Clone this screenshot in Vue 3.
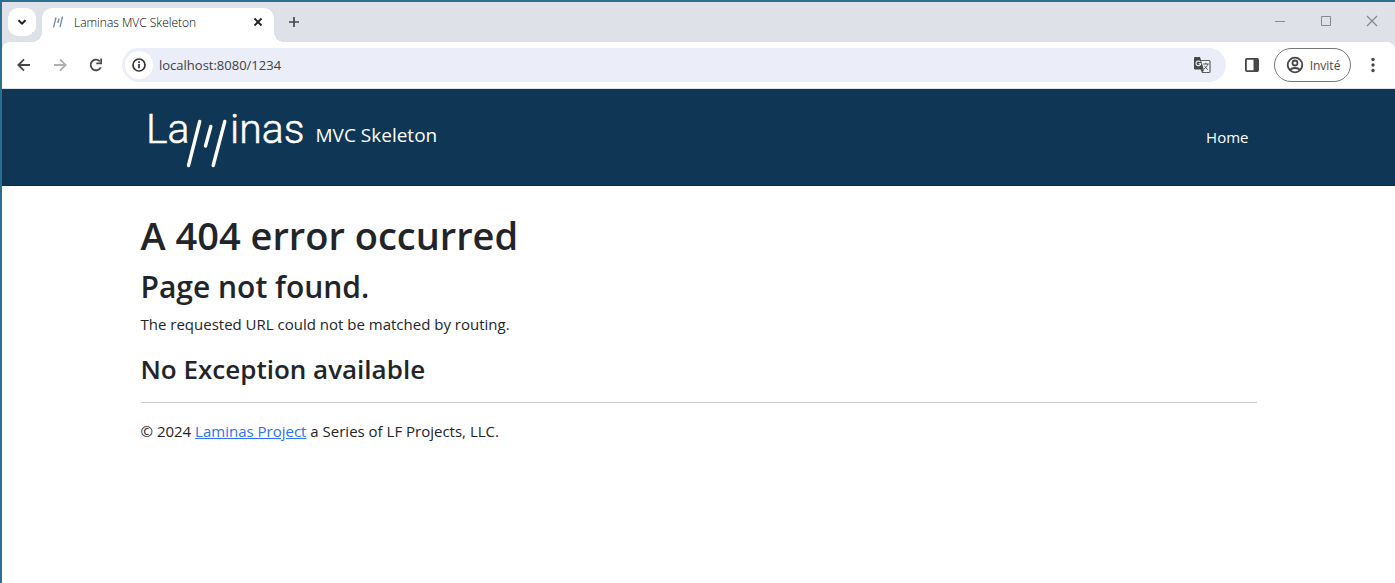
<script setup>
const tabTitle = 'Laminas MVC Skeleton'
const address = 'localhost:8080/1234'
</script>

<template>
  <div class="window">
    <div class="tabstrip">
      <button class="tab-search" aria-label="Search tabs">
        <svg width="28" height="28" viewBox="0 0 28 28"><path d="M10.500 12.200l3.500 3.500 3.500-3.500" fill="none" stroke="#1f1f1f" stroke-width="2" /></svg>
      </button>
      <div class="tab">
        <svg class="favicon" width="16" height="16" viewBox="0 0 16 16">
          <path d="M6 3.500L3.500 13.500M9 4.500L7.800 9M12.500 2.500L10 13" fill="none" stroke="#7189a0" stroke-width="1.300" />
        </svg>
        <span class="tab-title">{{ tabTitle }}</span>
        <button class="tab-close" aria-label="Close tab">
          <svg width="16" height="16" viewBox="0 0 16 16"><path d="M4.500 4.500l7 7M11.500 4.500l-7 7" stroke="#1f1f1f" stroke-width="1.800" /></svg>
        </button>
      </div>
      <button class="new-tab" aria-label="New tab">
        <svg width="28" height="28" viewBox="0 0 28 28"><path d="M14 9v10M9 14h10" stroke="#474747" stroke-width="1.700" /></svg>
      </button>
      <div class="caption">
        <button aria-label="Minimize"><svg width="46" height="40" viewBox="0 0 46 40"><path d="M18 19.500h10" stroke="#85878a" /></svg></button>
        <button aria-label="Maximize"><svg width="46" height="40" viewBox="0 0 46 40"><path d="M18.500 14.500h9v9h-9z" fill="none" stroke="#85878a" /></svg></button>
        <button aria-label="Close"><svg width="46" height="40" viewBox="0 0 46 40"><path d="M18 14l10 10M28 14L18 24" stroke="#85878a" stroke-width="1.200" /></svg></button>
      </div>
    </div>

    <div class="toolbar-wrap">
      <div class="toolbar">
        <button class="nav-btn" aria-label="Back">
          <svg width="36" height="34" viewBox="0 0 36 34"><path d="M24 17H12.500M18 11.300L12.300 17l5.700 5.700" fill="none" stroke="#474747" stroke-width="1.800" /></svg>
        </button>
        <button class="nav-btn" aria-label="Forward">
          <svg width="36" height="34" viewBox="0 0 36 34"><path d="M12 17h11.500M18 11.300l5.700 5.700-5.700 5.700" fill="none" stroke="#b0b0b0" stroke-width="1.800" /></svg>
        </button>
        <button class="nav-btn" aria-label="Reload">
          <svg width="36" height="34" viewBox="0 0 36 34">
            <path d="M22.700 19.300a5.300 5.300 0 1 1-.9-6" fill="none" stroke="#474747" stroke-width="1.800" />
            <path d="M24 10.500v5.700h-5.700v-1.800h4V10.500z" fill="#474747" />
          </svg>
        </button>
        <div class="omnibox">
          <button class="site-info" aria-label="Site information">
            <svg width="28" height="28" viewBox="0 0 28 28">
              <circle cx="14" cy="14" r="6" fill="none" stroke="#303134" stroke-width="1.700" />
              <path d="M14 13v4.300M14 10.200v1.700" stroke="#303134" stroke-width="1.700" />
            </svg>
          </button>
          <input class="address" type="text" aria-label="Address" :value="address">
          <button class="translate" aria-label="Translate this page">
            <svg width="18" height="18" viewBox="0 0 18 18">
              <path d="M7.500 4.500h8.500q1 0 1 1v10q0 1-1 1H9.500L8 13" fill="#f4f5fa" stroke="#5a5c60" stroke-width="1.200" />
              <path d="M10 8h5.800M12.900 6.600V8M14.700 8c-.4 2-1.600 3.600-3.700 5M11.600 9.800c.8 1.700 1.800 2.700 3.200 3.900" fill="none" stroke="#5a5c60" />
              <path d="M2 1h5l3.800 12.500H2q-1 0-1-1V2q0-1 1-1z" fill="#474747" />
              <path d="M8.700 13.500h2.600L9.500 16.500z" fill="#474747" />
              <path d="M7.300 5.900A2.400 2.400 0 1 0 7.800 7.700H5.500" fill="none" stroke="#fff" stroke-width="1.100" />
            </svg>
          </button>
        </div>
        <button class="side-panel" aria-label="Side panel">
          <svg width="16" height="16" viewBox="0 0 16 16">
            <rect x="1.900" y="1.900" width="12.200" height="12.200" rx="1" fill="none" stroke="#474747" stroke-width="1.800" />
            <path d="M9.500 1.500H14v13H9.500z" fill="#474747" />
          </svg>
        </button>
        <button class="profile">
          <svg width="20" height="20" viewBox="0 0 20 20" fill="none" stroke="#474747" stroke-width="1.800">
            <circle cx="10" cy="10" r="7.300" /><circle cx="10" cy="8" r="2.500" />
            <path d="M4.700 15c2.600-2.700 8-2.700 10.600 0" />
          </svg>
          <span>Invité</span>
        </button>
        <button class="menu" aria-label="Menu">
          <svg width="16" height="20" viewBox="0 0 16 20" fill="#474747"><circle cx="8" cy="4.500" r="1.700" /><circle cx="8" cy="10" r="1.700" /><circle cx="8" cy="15.500" r="1.700" /></svg>
        </button>
      </div>
    </div>

    <header class="site-header">
      <nav class="container navbar">
        <a class="brand" href="#">
          <svg class="logo" width="162" height="68" viewBox="0 0 162 68" role="img" aria-label="Laminas">
            <g class="wordmark"><text x="0" y="42">La</text><text x="84" y="42">inas</text></g>
            <path d="M53.700 20.500L42.500 64.500M64.800 25.500L59.500 45M78.800 20.500L67.200 64.500" fill="none" stroke="#fff" stroke-width="3.400" stroke-linecap="round" />
          </svg>
          <span>MVC Skeleton</span>
        </a>
        <a class="home" href="#">Home</a>
      </nav>
    </header>

    <main class="container content">
      <h1>A 404 error occurred</h1>
      <h2>Page not found.</h2>
      <p>The requested URL could not be matched by routing.</p>
      <h3>No Exception available</h3>
      <hr>
      <footer>© 2024 <a href="#">Laminas Project</a> a Series of LF Projects, LLC.</footer>
    </main>
  </div>
</template>

<style>
body {
  margin: 0;
  background: #fff;
}
</style>

<style scoped>
* {
  box-sizing: border-box;
}
.window {
  min-height: 100vh;
  border-top: 2px solid #2b6f8e;
  border-left: 2px solid #2b6f8e;
  background: #fff;
  color: #212529;
  font-family: "Open Sans", "Noto Sans", sans-serif;
}
button {
  display: flex;
  align-items: center;
  justify-content: center;
  padding: 0;
  border: 0;
  background: none;
  font: inherit;
  flex: none;
}
svg {
  display: block;
  flex: none;
}
.tabstrip {
  display: flex;
  height: 40px;
  padding-left: 6px;
  background: #dee1e8;
}
.tab-search {
  width: 28px;
  height: 28px;
  margin-top: 6px;
  border-radius: 10px;
  background: #fff;
}
.tab {
  position: relative;
  display: flex;
  align-items: center;
  width: 232px;
  height: 34px;
  margin: 6px 0 0 6px;
  padding: 0 8px 6px;
  border-radius: 10px 10px 0 0;
  background: #fff;
}
.tab::before,
.tab::after {
  content: "";
  position: absolute;
  bottom: 0;
  width: 10px;
  height: 10px;
}
.tab::before {
  right: 100%;
  background: radial-gradient(circle at 0 0, #dee1e8 10px, #fff 10px);
}
.tab::after {
  left: 100%;
  background: radial-gradient(circle at 100% 0, #dee1e8 10px, #fff 10px);
}
.tab-title {
  flex: 1;
  margin-left: 8px;
  font-size: 12px;
  font-weight: 300;
  color: #000;
}
.new-tab {
  width: 28px;
  height: 28px;
  margin: 6px 0 0 6px;
}
.caption {
  display: flex;
  margin-left: auto;
}
.toolbar-wrap {
  background: #dee1e8;
}
.toolbar {
  display: flex;
  align-items: center;
  height: 47px;
  padding: 0 4px;
  border-bottom: 1px solid #dcdfe3;
  border-radius: 8px 8px 0 0;
  background: #fff;
}
.omnibox {
  display: flex;
  flex: 1;
  align-items: center;
  height: 34px;
  margin-left: 8px;
  padding: 0 15px 0 3px;
  border-radius: 17px;
  background: #ebeef8;
}
.site-info {
  width: 28px;
  height: 28px;
  border-radius: 50%;
  background: #fff;
}
.address {
  flex: 1;
  min-width: 0;
  margin-left: 6px;
  padding: 0;
  border: 0;
  outline: 0;
  background: none;
  color: #3c4043;
  font: 13px/20px "Open Sans", "Noto Sans", sans-serif;
}
.side-panel {
  margin-left: 18px;
}
.profile {
  width: 77px;
  height: 34px;
  margin-left: 14px;
  gap: 5px;
  border: 1px solid #747775;
  border-radius: 17px;
  color: #474747;
  font-size: 12px;
}
.menu {
  margin: 0 10px 0 14px;
}
.container {
  width: 100%;
  max-width: 1140px;
  margin: 0 auto;
  padding: 0 12px;
}
.site-header {
  padding: 12px 0 16px;
  border-bottom: 1px solid #0b2d48;
  background: #0f3655;
}
.navbar {
  display: flex;
  align-items: center;
  justify-content: space-between;
}
.brand {
  display: flex;
  align-items: center;
  gap: 8px;
  padding-left: 5px;
  color: #fff;
  font-size: 19px;
  line-height: 30px;
  text-decoration: none;
}
.wordmark {
  fill: #fff;
  stroke: #fff;
  stroke-width: 0.5;
  stroke-linejoin: round;
  font-family: Roboto, sans-serif;
  font-size: 41px;
  font-weight: 300;
}
.home {
  padding: 4px 8px 0;
  color: #fff;
  font-size: 15px;
  line-height: 24px;
  text-decoration: none;
}
.content {
  padding-top: 26px;
  font-size: 15px;
  line-height: 24px;
}
h1,
h2,
h3 {
  margin: 0 0 8px;
  font-weight: 600;
}
h1 {
  margin-bottom: 10px;
  font-size: 38px;
  line-height: 46px;
}
h2 {
  margin-bottom: 6px;
  font-size: 30px;
  line-height: 38px;
}
h3 {
  font-size: 26px;
  line-height: 34px;
}
p {
  margin: 0 0 16px;
}
hr {
  height: 1px;
  margin: 16px 0;
  border: 0;
  background: #c8c9ca;
}
footer a {
  color: #2f6ff5;
  text-decoration: underline;
}
</style>
